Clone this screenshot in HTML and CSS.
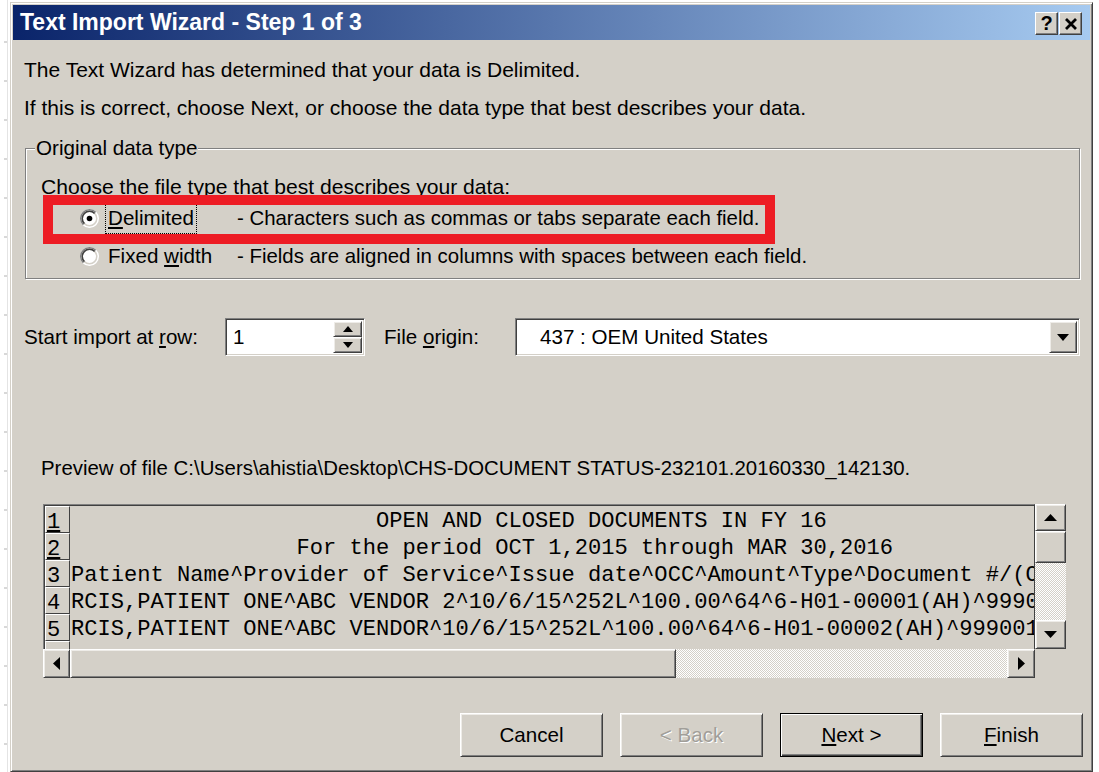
FILE: index.html
```html
<!DOCTYPE html>
<html lang="en">
<head>
<meta charset="utf-8">
<title>Text Import Wizard - Step 1 of 3</title>
<link rel="stylesheet" href="styles.css">
</head>
<body>
<div class="screen">
  <div class="gutter"></div>
  <div class="window">
    <div class="titlebar">
      <span class="title">Text Import Wizard - Step 1 of 3</span>
      <div class="cap-btns">
        <div class="cap-btn help">?</div>
        <div class="cap-btn close">
          <svg width="12" height="12" viewBox="0 0 12 12"><path d="M1 1L11 11M11 1L1 11" stroke="#000" stroke-width="2.8" fill="none"/></svg>
        </div>
      </div>
    </div>

    <div class="body">
      <p class="line">The Text Wizard has determined that your data is Delimited.</p>
      <p class="line">If this is correct, choose Next, or choose the data type that best describes your data.</p>

      <div class="group">
        <span class="group-title">Original data type</span>
        <div class="choose">Choose the file type that best describes your data:</div>
        <div class="opt">
          <svg class="radio" width="19" height="19" viewBox="0 0 19 19">
            <circle cx="9.5" cy="9.5" r="8.75" fill="#fff" stroke="#fff" stroke-width="1.5"/>
            <path d="M3.31 15.69A8.75 8.75 0 0 1 15.69 3.31" stroke="#808080" stroke-width="1.5" fill="none"/>
            <circle cx="9.5" cy="9.5" r="7.25" fill="none" stroke="#d4d0c8" stroke-width="1.5"/>
            <path d="M4.37 14.63A7.25 7.25 0 0 1 14.63 4.37" stroke="#404040" stroke-width="1.5" fill="none"/>
            <circle cx="9.5" cy="9.5" r="2.8" fill="#000"/>
          </svg>
          <span class="opt-label"><span class="focus"><u>D</u>elimited</span></span>
          <span class="opt-desc">- Characters such as commas or tabs separate each field.</span>
          <span class="marker"></span>
        </div>
        <div class="opt">
          <svg class="radio" width="19" height="19" viewBox="0 0 19 19">
            <circle cx="9.5" cy="9.5" r="8.75" fill="#fff" stroke="#fff" stroke-width="1.5"/>
            <path d="M3.31 15.69A8.75 8.75 0 0 1 15.69 3.31" stroke="#808080" stroke-width="1.5" fill="none"/>
            <circle cx="9.5" cy="9.5" r="7.25" fill="none" stroke="#d4d0c8" stroke-width="1.5"/>
            <path d="M4.37 14.63A7.25 7.25 0 0 1 14.63 4.37" stroke="#404040" stroke-width="1.5" fill="none"/>
          </svg>
          <span class="opt-label"><span class="plain">Fixed <u>w</u>idth</span></span>
          <span class="opt-desc">- Fields are aligned in columns with spaces between each field.</span>
        </div>
      </div>

      <div class="import-row">
        <span class="row-label">Start import at <u>r</u>ow:</span>
        <div class="spin sunken">
          <span class="spin-value">1</span>
          <div class="spin-btns">
            <div class="spin-btn raised">
              <svg width="10" height="6" viewBox="0 0 10 6"><path d="M5 0L10 6H0Z" fill="#000"/></svg>
            </div>
            <div class="spin-btn raised">
              <svg width="10" height="6" viewBox="0 0 10 6"><path d="M0 0H10L5 6Z" fill="#000"/></svg>
            </div>
          </div>
        </div>
        <span class="origin-label">File <u>o</u>rigin:</span>
        <div class="combo sunken">
          <span class="combo-value">437 : OEM United States</span>
          <div class="combo-btn raised">
            <svg width="12" height="7" viewBox="0 0 12 7"><path d="M0 0H12L6 7Z" fill="#000"/></svg>
          </div>
        </div>
      </div>

      <div class="preview-label">Preview of file C:\Users\ahistia\Desktop\CHS-DOCUMENT STATUS-232101.20160330_142130.</div>

      <div class="preview">
        <div class="preview-text">
          <div class="prow"><span class="rh"><u>1</u></span><span class="rt">                       OPEN AND CLOSED DOCUMENTS IN FY 16</span></div>
          <div class="prow"><span class="rh"><u>2</u></span><span class="rt">                 For the period OCT 1,2015 through MAR 30,2016</span></div>
          <div class="prow"><span class="rh">3</span><span class="rt">Patient Name^Provider of Service^Issue date^OCC^Amount^Type^Document #/(Obligation #)^Status</span></div>
          <div class="prow"><span class="rh">4</span><span class="rt">RCIS,PATIENT ONE^ABC VENDOR 2^10/6/15^252L^100.00^64^6-H01-00001(AH)^99900123^OPEN</span></div>
          <div class="prow"><span class="rh">5</span><span class="rt">RCIS,PATIENT ONE^ABC VENDOR^10/6/15^252L^100.00^64^6-H01-00002(AH)^99900124^OPEN</span></div>
          <div class="prow"><span class="rh"></span><span class="rt"></span></div>
        </div>

        <div class="vscroll">
          <div class="sb-btn raised up">
            <svg width="13" height="7" viewBox="0 0 13 7"><path d="M6.5 0L13 7H0Z" fill="#000"/></svg>
          </div>
          <div class="sb-thumb raised v"></div>
          <div class="sb-track"></div>
          <div class="sb-btn raised down">
            <svg width="13" height="7" viewBox="0 0 13 7"><path d="M0 0H13L6.5 7Z" fill="#000"/></svg>
          </div>
        </div>

        <div class="hscroll">
          <div class="sb-btn raised left">
            <svg width="7" height="13" viewBox="0 0 7 13"><path d="M0 6.5L7 0V13Z" fill="#000"/></svg>
          </div>
          <div class="sb-thumb raised h"></div>
          <div class="sb-track"></div>
          <div class="sb-btn raised right">
            <svg width="7" height="13" viewBox="0 0 7 13"><path d="M7 6.5L0 0V13Z" fill="#000"/></svg>
          </div>
        </div>

        <div class="corner"></div>
      </div>

      <div class="actions">
        <div class="btn raised">Cancel</div>
        <div class="btn raised disabled">&lt; Back</div>
        <div class="btn raised default"><u>N</u>ext &gt;</div>
        <div class="btn raised"><u>F</u>inish</div>
      </div>
    </div>
  </div>
</div>
</body>
</html>
```

FILE: styles.css
```css
* { box-sizing: border-box; }

html, body {
  margin: 0;
  background: #fff;
}

body {
  font-family: "Liberation Sans", Arial, sans-serif;
  font-size: 20.6px;
  color: #000;
}

u { text-decoration: underline; text-underline-offset: 2px; }

.screen {
  display: flex;
  height: 772px;
  overflow: hidden;
}

/* faint ruler strip along the left edge */
.gutter {
  width: 10px;
  flex: none;
  background:
    linear-gradient(#e4e4e4, #e4e4e4) 7px 0 / 1px 100% no-repeat,
    repeating-linear-gradient(to bottom, transparent 0 37px, #d8d8d8 37px 39px) 4px 4px / 3px 100% no-repeat;
}

/* dialog frame */
.window {
  width: 1083px;
  height: 770px;
  margin-top: 2px;
  background: #d4d0c8;
  border: 1px solid;
  border-color: #d4d0c8 #404040 #404040 #d4d0c8;
  box-shadow: inset 1px 1px #fff, inset -1px -1px #808080;
  padding: 2px;
  display: flex;
  flex-direction: column;
}

.titlebar {
  height: 35px;
  flex: none;
  display: flex;
  align-items: center;
  padding: 0 7px;
  background: linear-gradient(to right, #0a246a, #a6caf0);
  color: #fff;
  font-weight: bold;
  font-size: 23px;
}

.title { flex: 1; white-space: nowrap; }

.cap-btns {
  display: flex;
  gap: 1px;
  margin-top: 2px;
  margin-right: 1px;
}

.cap-btn {
  width: 23px;
  height: 23px;
  display: flex;
  align-items: center;
  justify-content: center;
  background: #d4d0c8;
  border: 1px solid;
  border-color: #fff #404040 #404040 #fff;
  box-shadow: inset -1px -1px #808080;
  color: #000;
  font-size: 20px;
  font-weight: bold;
  line-height: 1;
}

.cap-btn.help { padding-bottom: 1px; }

/* generic 3D bevels */
.raised {
  background: #d4d0c8;
  border: 1px solid;
  border-color: #fff #404040 #404040 #fff;
  box-shadow: inset 1px 1px #eeece8, inset -1px -1px #808080;
}

.sunken {
  background: #fff;
  border: 1px solid;
  border-color: #808080 #fff #fff #808080;
  box-shadow: inset 1px 1px #404040, inset -1px -1px #d4d0c8;
}

.body {
  flex: 1;
  padding: 11px 10px 0 11px;
}

.line {
  margin: 0;
  line-height: 38px;
  white-space: nowrap;
  font-size: 21px;
}

/* "Original data type" frame */
.group {
  position: relative;
  margin: 21px 0 0 1px;
  height: 131px;
  border: 1px solid #808080;
  box-shadow: inset 1px 1px #fff, 1px 1px #fff;
  padding: 26px 0 2px 15px;
}

.group-title {
  position: absolute;
  top: -12px;
  left: 9px;
  padding: 0 1px;
  line-height: 22px;
  background: #d4d0c8;
}

.choose {
  line-height: 24px;
  white-space: nowrap;
  font-size: 21.1px;
}

.opt {
  position: relative;
  height: 38px;
  display: flex;
  align-items: center;
  white-space: nowrap;
}

.radio {
  flex: none;
  margin-left: 39px;
}

.opt-label {
  width: 132px;
  margin-left: 6px;
  flex: none;
}

.opt-desc { font-size: 20.4px; }

.focus {
  display: inline-block;
  border: 1px dotted #000;
  padding: 0 2px;
  line-height: 30px;
}

.plain {
  display: inline-block;
  padding: 0 3px;
  line-height: 30px;
}

/* red annotation box over the Delimited option */
.marker {
  position: absolute;
  left: 2px;
  top: -4px;
  width: 732px;
  height: 49px;
  border: 10px solid #ed1c24;
}

.import-row {
  display: flex;
  align-items: center;
  height: 38px;
  margin-top: 39px;
  white-space: nowrap;
}

.row-label { width: 201px; flex: none; }

.spin {
  width: 140px;
  height: 38px;
  flex: none;
  display: flex;
  align-items: center;
  padding: 2px 2px 2px 7px;
}

.spin-value { flex: 1; }

.spin-btns {
  width: 29px;
  height: 100%;
  display: flex;
  flex-direction: column;
}

.spin-btn {
  flex: 1;
  display: flex;
  align-items: center;
  justify-content: center;
}

.origin-label {
  width: 131px;
  margin-left: 19px;
  flex: none;
}

.combo {
  flex: 1;
  height: 38px;
  display: flex;
  align-items: center;
  padding: 2px 2px 2px 24px;
}

.combo-value { flex: 1; }

.combo-btn {
  width: 28px;
  height: 100%;
  display: flex;
  align-items: center;
  justify-content: center;
}

.preview-label {
  margin-top: 100px;
  padding-left: 17px;
  line-height: 24px;
  white-space: nowrap;
  font-size: 20.4px;
}

/* preview pane with its scroll bars */
.preview {
  margin: 24px 0 0 19px;
  width: 1023px;
  height: 174px;
  display: grid;
  grid-template-columns: 992px 31px;
  grid-template-rows: 145px 29px;
}

.preview-text {
  overflow: hidden;
  border-top: 1px solid #808080;
  border-left: 1px solid #808080;
  border-right: 1px solid #404040;
  box-shadow: inset 1px 1px #404040;
  padding: 1px 0 0 1px;
  font-family: "Liberation Mono", "Courier New", monospace;
  font-size: 22.1px;
}

.prow {
  height: 27px;
  display: flex;
  white-space: pre;
}

.rh {
  width: 25px;
  flex: none;
  height: 27px;
  border: 1px solid;
  border-color: #fff #404040 #404040 #fff;
  padding-left: 1px;
  line-height: 31px;
}

.rt {
  padding-left: 1px;
  line-height: 31px;
}

.vscroll {
  display: flex;
  flex-direction: column;
}

.hscroll {
  display: flex;
}

.sb-btn {
  display: flex;
  align-items: center;
  justify-content: center;
  flex: none;
}

.vscroll .up { height: 27px; }
.vscroll .down { height: 29px; }
.sb-thumb.v { height: 32px; flex: none; }

.hscroll .left { width: 27px; }
.hscroll .right { width: 28px; }
.sb-thumb.h { width: 606px; flex: none; }

.sb-track {
  flex: 1;
  background-color: #fff;
  background-image: repeating-conic-gradient(#d4d0c8 0 25%, #fff 0 50%);
  background-size: 2px 2px;
}

.actions {
  display: flex;
  justify-content: flex-end;
  gap: 17px;
  margin: 35px -3px 0 0;
}

.btn {
  width: 143px;
  height: 44px;
  display: flex;
  align-items: center;
  justify-content: center;
  white-space: nowrap;
}

.btn.disabled {
  color: #a19e99;
  text-shadow: 1px 1px #fff;
}

.btn.default {
  border: 1px solid #000;
  box-shadow: inset 1px 1px #fff, inset -1px -1px #404040, inset -2px -2px #808080;
}
```
